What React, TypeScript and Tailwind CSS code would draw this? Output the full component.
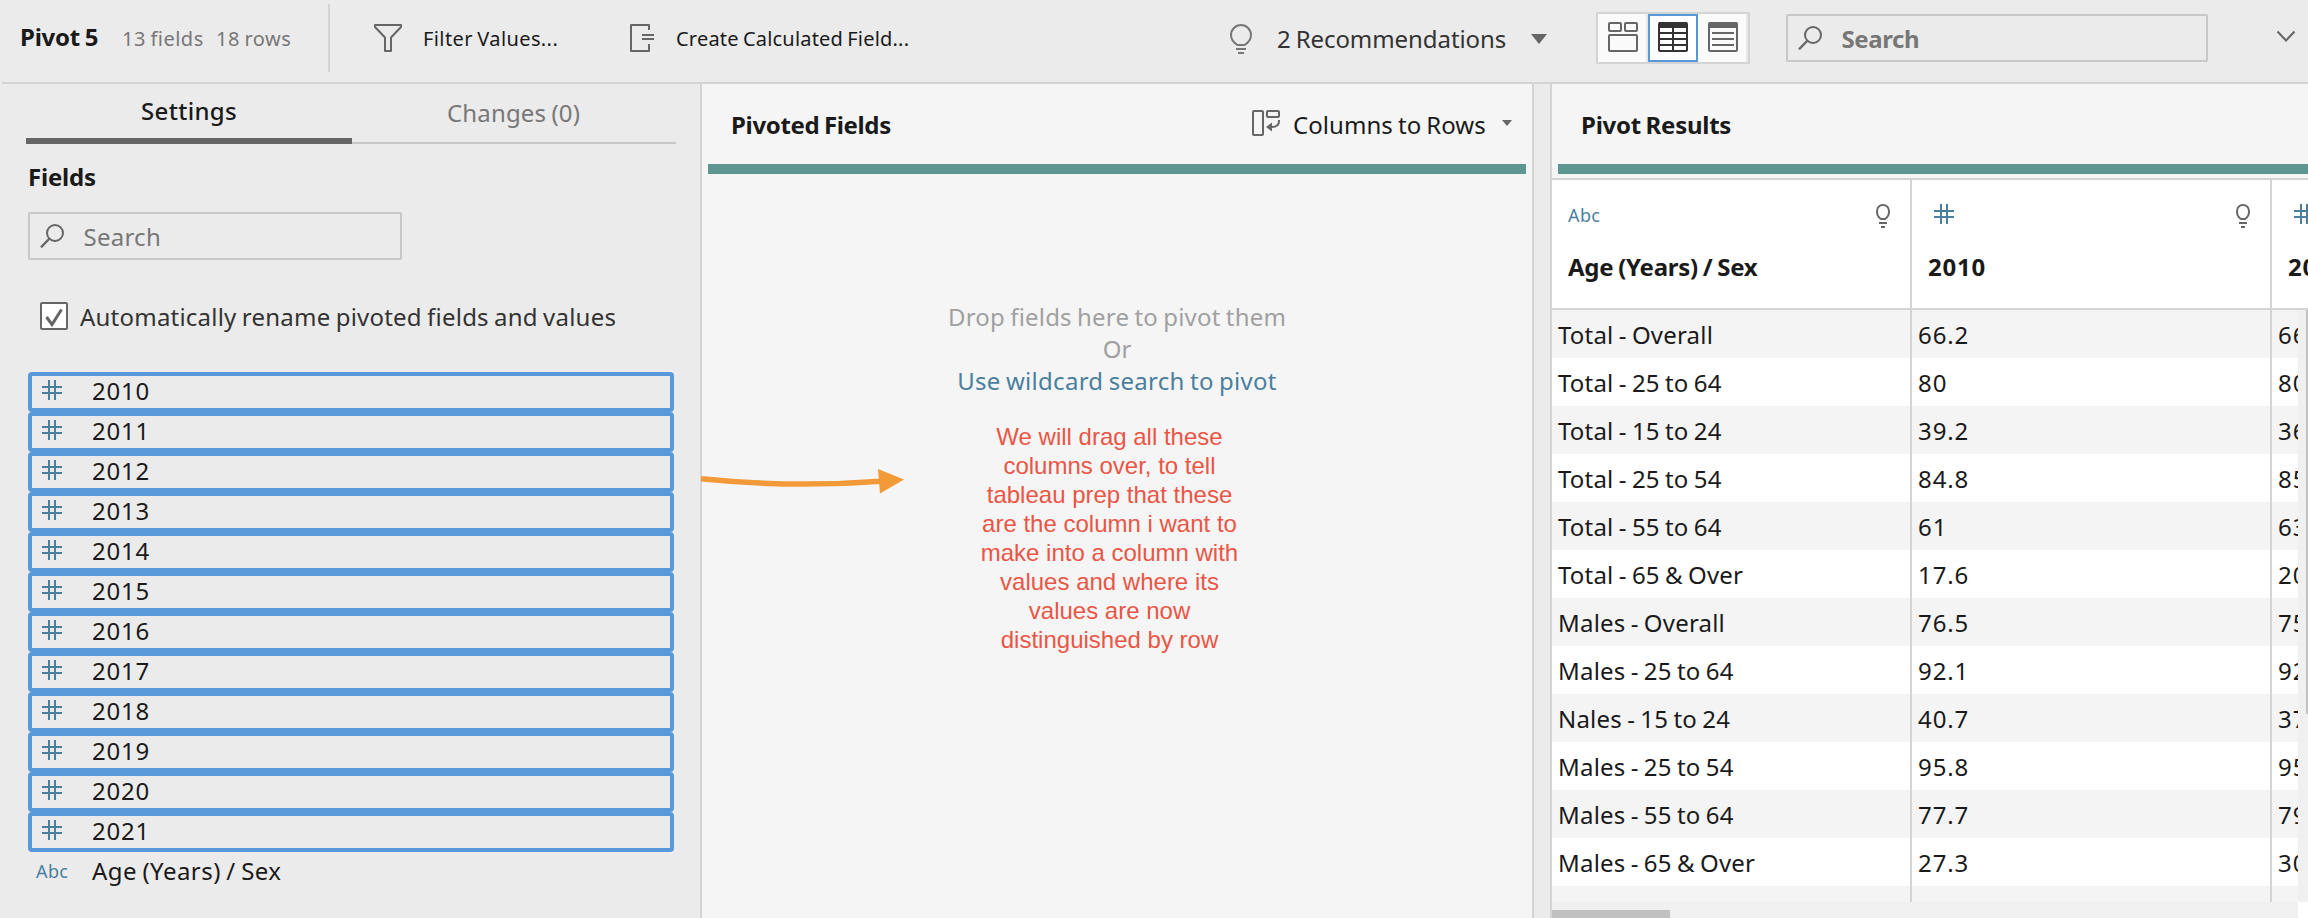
import React from "react";

const YEARS = ["2010", "2011", "2012", "2013", "2014", "2015", "2016", "2017", "2018", "2019", "2020", "2021"];

const ROWS: [string, string, string][] = [
  ["Total - Overall", "66.2", "66.4"],
  ["Total - 25 to 64", "80", "80.2"],
  ["Total - 15 to 24", "39.2", "36.9"],
  ["Total - 25 to 54", "84.8", "85.2"],
  ["Total - 55 to 64", "61", "63.4"],
  ["Total - 65 & Over", "17.6", "20.2"],
  ["Males - Overall", "76.5", "75.6"],
  ["Males - 25 to 64", "92.1", "92.2"],
  ["Nales - 15 to 24", "40.7", "37.8"],
  ["Males - 25 to 54", "95.8", "95.9"],
  ["Males - 55 to 64", "77.7", "79.2"],
  ["Males - 65 & Over", "27.3", "30.1"],
  ["Females - Overall", "56.5", "57"],
];

const NOTE = [
  "We will drag all these",
  "columns over, to tell",
  "tableau prep that these",
  "are the column i want to",
  "make into a column with",
  "values and where its",
  "values are now",
  "distinguished by row",
];

const line = { fill: "none", stroke: "currentColor", strokeWidth: 2 } as const;

function FilterIcon() {
  return (
    <svg width="28" height="28" className="block shrink-0 text-[#666]" {...line} strokeLinejoin="round">
      <path d="M1 1H27V3L17 13.5V27H11V13.5L1 3Z" />
    </svg>
  );
}

function CalcIcon() {
  return (
    <svg width="24" height="28" className="block shrink-0 text-[#666]" {...line} strokeLinejoin="round">
      <path d="M19 6V1H1V27H19V20M12 11H24M12 15H24" />
    </svg>
  );
}

function BulbIcon() {
  return (
    <svg width="22" height="30" className="block shrink-0 text-[#777]" {...line}>
      <path d="M7.5 21C3.5 18.500 1 15 1 11A10 10 0 0 1 21 11C21 15 18.500 18.500 14.500 21Z" />
      <path d="M6 25H16M8 29H14" />
    </svg>
  );
}

function SmallBulbIcon() {
  return (
    <svg width="14" height="24" className="block shrink-0 text-[#666]" {...line}>
      <path d="M5 15C2.500 13.500 1 10.500 1 7.500C1 3.500 3.500 1 7 1S13 3.500 13 7.500C13 10.500 11.500 13.500 9 15Z" />
      <path d="M3 19H11M5 23H9" />
    </svg>
  );
}

function HashIcon() {
  return (
    <svg width="20" height="20" className="block shrink-0 text-[#4a7f9e]" {...line}>
      <path d="M7 0V20M13 0V20M0 7H20M0 13H20" />
    </svg>
  );
}

function SearchIcon() {
  return (
    <svg width="24" height="24" className="block shrink-0 text-[#666]" {...line}>
      <circle cx="15" cy="9" r="8" />
      <path d="M9.500 14.500L1 23.300" strokeWidth="2.4" />
    </svg>
  );
}

function CardsIcon() {
  return (
    <svg width="30" height="30" className="block text-[#666]" {...line}>
      <rect x="1" y="1" width="12" height="8" rx="1" />
      <rect x="17" y="1" width="12" height="8" rx="1" />
      <rect x="1" y="13" width="28" height="16" rx="1" />
    </svg>
  );
}

function GridIcon() {
  return (
    <svg width="30" height="30" className="block text-[#333]" {...line}>
      <rect x="1" y="1" width="28" height="28" rx="1" fill="#fff" />
      <path d="M1 3H29" strokeWidth="6" strokeLinecap="butt" />
      <path d="M15 5V29M1 11H29M1 17H29M1 23H29" />
    </svg>
  );
}

function ListIcon() {
  return (
    <svg width="30" height="30" className="block text-[#666]" {...line}>
      <rect x="1" y="1" width="28" height="28" rx="1" />
      <path d="M1 3H29" strokeWidth="6" />
      <path d="M4 11H26M4 17H26M4 23H26" />
    </svg>
  );
}

function PivotIcon() {
  return (
    <svg width="28" height="26" className="block shrink-0 text-[#666]" {...line}>
      <rect x="1" y="1" width="10" height="24" rx="1" />
      <rect x="15" y="1" width="12" height="6" rx="1" />
      <path d="M27 10V11C27 15 24 17 20 17H19" />
      <path d="M14 17L20 12.500V21.500Z" fill="currentColor" stroke="none" />
    </svg>
  );
}

function Header() {
  return (
    <header className="flex h-[82px] shrink-0 items-start">
      <h1 className="w-[100px] pl-[20px] pt-[20px] font-bold tracking-[-0.25px]">Pivot 5</h1>
      <span className="ml-[22px] mt-[25px] w-[94px] text-[20px] leading-[27px] tracking-[0.5px] text-[#777]">13 fields</span>
      <span className="mt-[25px] w-[112px] text-[20px] leading-[27px] tracking-[0.5px] text-[#777]">18 rows</span>
      <div className="mt-1 h-[68px] w-[2px] bg-[#d4d4d4]" />
      <div className="ml-[44px] flex w-[256px] pt-6">
        <FilterIcon />
        <span className="ml-[21px] mt-px text-[20px] leading-[27px] tracking-[0.4px]">Filter Values...</span>
      </div>
      <div className="flex w-[600px] pt-6">
        <CalcIcon />
        <span className="ml-[22px] mt-px text-[20px] leading-[27px] tracking-[0.2px]">Create Calculated Field...</span>
      </div>
      <div className="flex w-[366px] pt-6">
        <BulbIcon />
        <span className="-mt-[2px] ml-[25px] w-[254px] tracking-[-0.07px] text-[#333]">2 Recommendations</span>
        <svg width="16" height="10" className="mt-[10px] block text-[#666]">
          <path d="M0 0H16L8 10Z" fill="currentColor" />
        </svg>
      </div>
      <div className="mt-3 flex h-[52px] w-[154px] border-2 border-[#d4d4d4] bg-[#fafafa]">
        <button className="h-12 w-[50px] border-r-2 border-[#e8e8e8] pb-[10px] pl-[10px] pt-2">
          <CardsIcon />
        </button>
        <button className="h-12 w-[50px] border-2 border-[#5899da] bg-white pb-2 pl-2 pt-[6px]">
          <GridIcon />
        </button>
        <button className="h-12 w-[50px] border-r-2 border-[#e8e8e8] pb-[10px] pl-[10px] pt-2">
          <ListIcon />
        </button>
      </div>
      <div className="ml-9 mt-[14px] flex h-12 w-[422px] rounded-[2px] border-2 border-[#c8c8c8] pl-[10px] pt-[10px]">
        <SearchIcon />
        <span className="-mt-1 ml-[19.500px] font-bold tracking-[-0.4px] text-[#777]">Search</span>
      </div>
      <svg width="20" height="12" className="ml-[68px] mt-[30px] block text-[#666]" {...line}>
        <path d="M1.500 1.500L10 10.500L18.500 1.500" />
      </svg>
    </header>
  );
}

function SettingsPanel() {
  return (
    <aside className="w-[700px] shrink-0">
      <div className="ml-[26px] flex h-[60px] w-[650px]">
        <div className="h-[60px] w-[326px] border-b-[6px] border-[#666] pt-[10px] text-center font-medium tracking-[0.3px]">
          Settings
        </div>
        <div className="h-[60px] w-[324px] border-b-2 border-[#c8c8c8] pr-px pt-[12px] text-center tracking-[0.18px] text-[#777]">
          Changes (0)
        </div>
      </div>
      <h2 className="ml-7 mt-4 font-bold tracking-[-0.2px]">Fields</h2>
      <div className="ml-7 mt-[19px] flex h-12 w-[374px] rounded-[2px] border-2 border-[#c8c8c8] pl-[10px] pt-[10px]">
        <SearchIcon />
        <span className="-mt-1 ml-[19.500px] tracking-[0.25px] text-[#777]">Search</span>
      </div>
      <label className="ml-10 mt-10 flex h-[34px] pt-[2px]">
        <span className="h-7 w-7 rounded-[2px] border-2 border-[#666] bg-white">
          <svg width="24" height="24" className="block text-[#666]" fill="none" stroke="currentColor" strokeWidth="3">
            <path d="M4.500 13L10 20.500L19.500 5.500" />
          </svg>
        </span>
        <span className="-mt-[2px] ml-3 tracking-[0.22px] text-[#333]">Automatically rename pivoted fields and values</span>
      </label>
      <ul className="ml-7 mt-[38px] w-[646px]">
        {YEARS.map((year) => (
          <li key={year} className="flex h-10 rounded-[4px] border-4 border-[#5899da] pl-[10px]">
            <span className="pt-1">
              <HashIcon />
            </span>
            <span className="-mt-[2px] ml-[30px] tracking-[0.8px]">{year}</span>
          </li>
        ))}
        <li className="flex h-10 pl-2">
          <span className="mt-[7px] w-[56px] text-[18px] leading-[24px] tracking-[0.4px] text-[#4a7f9e]">Abc</span>
          <span className="mt-[2px] tracking-[0.45px]">Age (Years) / Sex</span>
        </li>
      </ul>
    </aside>
  );
}

function PivotedFields() {
  return (
    <section className="relative w-[834px] shrink-0 border-x-2 border-[#d4d4d4] bg-[#f5f5f5]">
      <div className="flex h-20">
        <h2 className="ml-[29px] mt-6 w-[521px] font-bold tracking-[-0.35px]">Pivoted Fields</h2>
        <div className="mt-[26px] h-7 w-[28px]">
          <PivotIcon />
        </div>
        <span className="ml-[13px] mt-6 w-[209px] tracking-[0.05px]">Columns to Rows</span>
        <svg width="10" height="6" className="mt-9 block text-[#666]">
          <path d="M0 0H10L5 6Z" fill="currentColor" />
        </svg>
      </div>
      <div className="mx-[6px] h-[10px] bg-[#5e9791]" />
      <div className="mt-[127px] flex flex-col text-center leading-[32px]">
        <span className="tracking-[0.2px] text-[#a0a0a0]">Drop fields here to pivot them</span>
        <span className="text-[#a0a0a0]">Or</span>
        <span className="tracking-[0.28px] text-[#4a7f9e]">Use wildcard search to pivot</span>
      </div>
      <div className="mt-[25px] pr-[15px] text-center font-['Liberation_Sans',Arial,sans-serif] leading-[29px] text-[#ea5545] [word-spacing:0px]">
        {NOTE.map((text) => (
          <p key={text}>{text}</p>
        ))}
      </div>
      <svg width="206" height="40" className="absolute left-[-1px] top-[375px] block">
        <path d="M0 19.800Q90 29 180 22.200" fill="none" stroke="#f19a37" strokeWidth="5.500" />
        <path d="M177 10L203 20.500L179 34.500Z" fill="#f19a37" />
      </svg>
    </section>
  );
}

function PivotResults() {
  return (
    <section className="flex min-w-0 flex-1 flex-col overflow-hidden border-l-2 border-[#d4d4d4] bg-[#f5f5f5]">
      <div className="h-20 pl-[29px] pt-6">
        <h2 className="font-bold tracking-[-0.27px]">Pivot Results</h2>
      </div>
      <div className="ml-[6px] h-[10px] bg-[#5e9791]" />
      <div className="mt-1 flex h-[132px] shrink-0 overflow-hidden border-y-2 border-[#d4d4d4] bg-white">
        <div className="h-32 w-[360px] shrink-0 border-r-2 border-[#d4d4d4] pl-4 pt-6">
          <div className="flex h-[46px] justify-between pr-5">
            <span className="-mt-px text-[18px] leading-[24px] tracking-[0.4px] text-[#4a7f9e]">Abc</span>
            <SmallBulbIcon />
          </div>
          <div className="whitespace-nowrap font-bold tracking-[-0.25px]">Age (Years) / Sex</div>
        </div>
        <div className="h-32 w-[360px] shrink-0 border-r-2 border-[#d4d4d4] pl-4 pt-6">
          <div className="flex h-[46px] justify-between pl-[6px] pr-5">
            <HashIcon />
            <SmallBulbIcon />
          </div>
          <div className="font-bold tracking-[0.8px]">2010</div>
        </div>
        <div className="h-32 w-[360px] shrink-0 pl-4 pt-6">
          <div className="h-[46px] pl-[6px]">
            <HashIcon />
          </div>
          <div className="font-bold tracking-[0.8px]">2011</div>
        </div>
      </div>
      <div className="flex h-[592px] shrink-0">
        <div className="h-[592px] w-[746px] shrink-0 overflow-hidden">
          {ROWS.map(([label, first, second], i) => (
            <div key={label} className={i % 2 === 0 ? "flex h-12 bg-[#f4f4f4]" : "flex h-12 bg-white"}>
              <div className="w-[360px] shrink-0 border-r-2 border-[#d4d4d4] pl-[6px] pt-2 tracking-[0.2px]">{label}</div>
              <div className="w-[360px] shrink-0 border-r-2 border-[#d4d4d4] pl-[6px] pt-2 tracking-[0.9px]">{first}</div>
              <div className="w-[26px] shrink-0 overflow-hidden pl-[6px] pt-2 tracking-[0.9px]">{second}</div>
            </div>
          ))}
        </div>
        <div className="flex flex-1 justify-end bg-[#f0f0f0]">
          <div className="h-[404px] w-[2px] bg-[#c1c1c1]" />
        </div>
      </div>
      <div className="flex h-4 shrink-0 bg-white">
        <div className="w-[746px] bg-[#f0f0f0] pt-2">
          <div className="h-2 w-[118px] bg-[#c1c1c1]" />
        </div>
      </div>
    </section>
  );
}

export default function App() {
  return (
    <div className="flex h-[918px] w-[2308px] flex-col overflow-hidden bg-[#ebebeb] font-['Noto_Sans','Open_Sans',sans-serif] text-[24px] leading-[33px] text-[#1a1a1a] [word-spacing:-1.2px]">
      <Header />
      <div className="ml-[2px] h-[2px] shrink-0 bg-[#d4d4d4]" />
      <main className="flex h-[834px]">
        <SettingsPanel />
        <PivotedFields />
        <div className="w-4 shrink-0" />
        <PivotResults />
      </main>
    </div>
  );
}
